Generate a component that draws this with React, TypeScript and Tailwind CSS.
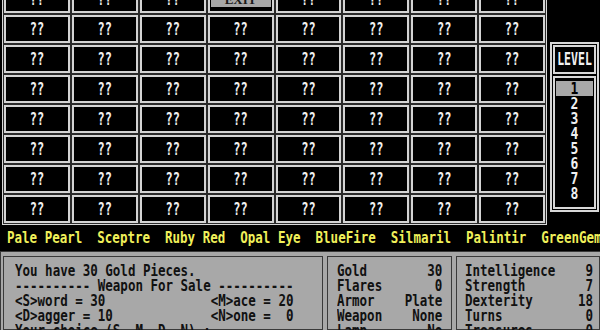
const maze = Array.from({ length: 64 }, (_, i) => i);
const levels = [1, 2, 3, 4, 5, 6, 7, 8];

const treasures = ["Pale Pearl", "Sceptre", "Ruby Red", "Opal Eye", "BlueFire", "Silmaril", "Palintir", "GreenGem"];

const shopLines = [
  "You have 30 Gold Pieces.",
  "---------- Weapon For Sale ----------",
  "<S>word = 30".padEnd(26) + "<M>ace = 20",
  "<D>agger = 10".padEnd(26) + "<N>one =  0",
  "Your choice (S, M, D, N) :",
];

const inventory: [string, string][] = [
  ["Gold", "30"],
  ["Flares", "0"],
  ["Armor", "Plate"],
  ["Weapon", "None"],
  ["Lamp", "No"],
];

const stats: [string, string][] = [
  ["Intelligence", "9"],
  ["Strength", "7"],
  ["Dexterity", "18"],
  ["Turns", "0"],
  ["Treasures", "0"],
];

function Line({ text }: { text: string }) {
  return (
    <div className="flex h-[15px] items-center whitespace-pre">
      <span className="inline-block scale-y-[1.2] leading-none">{text}</span>
    </div>
  );
}

function Maze() {
  return (
    <div className="-mt-[17px] ml-[2px] grid w-[545px] grid-cols-8 gap-[2px] border border-[#d8d8d8] bg-[#2a2a2a] p-px">
      {maze.map((i) =>
        i === 3 ? (
          <div key={i} className="h-[28px] border-2 border-[#d4d4d4] bg-black">
            <div className="mx-px mt-[2px] flex h-[18px] items-end justify-center bg-[#a8a8a8] pb-[1px] font-['Liberation_Serif',serif] text-[13px] font-bold leading-none text-[#1a1a1a]">
              EXIT
            </div>
          </div>
        ) : (
          <div key={i} className="flex h-[28px] items-center justify-center border-2 border-[#d4d4d4] bg-black text-[12px] font-bold text-[#f0f0f0]">
            <span className="inline-block scale-y-[1.5] leading-none">??</span>
          </div>
        )
      )}
    </div>
  );
}

function LevelPanel() {
  return (
    <div className="ml-[3px] mt-[42px] flex h-[170px] w-[49px] flex-col gap-[2px] border-2 border-[#d8d8d8] p-px">
      <div className="flex h-[29px] items-center justify-center border-2 border-[#d8d8d8] text-[11.5px] font-bold text-[#f0f0f0]">
        <span className="inline-block scale-y-[1.5] leading-none">LEVEL</span>
      </div>
      <div className="flex-1 border-2 border-[#d8d8d8] px-px pt-[3px]">
        {levels.map((n) => (
          <div
            key={n}
            className={`flex h-[15px] items-center justify-center text-[13px] font-bold ${
              n === 1 ? "bg-[#a8a8a8] text-black" : "text-[#f0f0f0]"
            }`}
          >
            <span className="inline-block scale-y-[1.15] leading-none">{n}</span>
          </div>
        ))}
      </div>
    </div>
  );
}

export default function App() {
  return (
    <div className="h-[330px] w-[600px] overflow-hidden bg-black font-['DejaVu_Sans_Mono',monospace] text-[12.5px]">
      <div className="flex h-[226px] items-start">
        <Maze />
        <LevelPanel />
      </div>

      {/* treasures still to find */}
      <div className="flex h-[25px] items-center pl-[7px] font-bold whitespace-pre text-[#f0f05a]">
        <span className="inline-block scale-y-[1.3] leading-none">{treasures.join("  ")}</span>
      </div>

      <div className="flex h-[79px] gap-[4px] border-l border-t border-[#3a3a3a] bg-[#a8a8a8] pl-[2px] pt-[4px] font-bold text-[#111]">
        <div className="w-[320px] border border-[#3a3a3a] pl-[11px] pt-[7px]">
          {shopLines.map((l, i) => (
            <Line key={i} text={l} />
          ))}
        </div>
        <div className="w-[125px] border border-[#3a3a3a] pl-[9px] pt-[7px]">
          {inventory.map(([k, v]) => (
            <Line key={k} text={k + v.padStart(14 - k.length)} />
          ))}
        </div>
        <div className="flex-1 border border-[#3a3a3a] pl-[8px] pt-[7px]">
          {stats.map(([k, v]) => (
            <Line key={k} text={k + v.padStart(17 - k.length)} />
          ))}
        </div>
      </div>
    </div>
  );
}
